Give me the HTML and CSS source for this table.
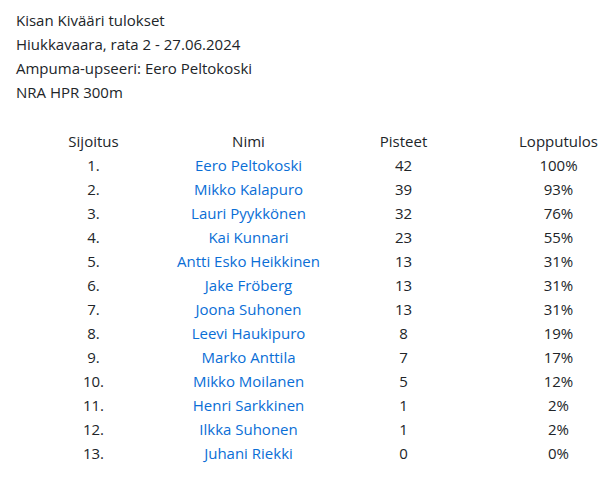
FILE: index.html
```html
<!DOCTYPE html>
<html lang="fi">
<head>
<meta charset="utf-8">
<title>Kisan Kivääri tulokset</title>
<link rel="stylesheet" href="styles.css">
</head>
<body>
<div class="page">
  <div class="info">
    <div class="line">Kisan Kivääri tulokset</div>
    <div class="line">Hiukkavaara, rata 2 - 27.06.2024</div>
    <div class="line">Ampuma-upseeri: Eero Peltokoski</div>
    <div class="line">NRA HPR 300m</div>
  </div>
  <div class="results">
    <div class="row head"><span>Sijoitus</span><span>Nimi</span><span>Pisteet</span><span>Lopputulos</span></div>
    <div class="row"><span>1.</span><a href="#">Eero Peltokoski</a><span>42</span><span>100%</span></div>
    <div class="row"><span>2.</span><a href="#">Mikko Kalapuro</a><span>39</span><span>93%</span></div>
    <div class="row"><span>3.</span><a href="#">Lauri Pyykkönen</a><span>32</span><span>76%</span></div>
    <div class="row"><span>4.</span><a href="#">Kai Kunnari</a><span>23</span><span>55%</span></div>
    <div class="row"><span>5.</span><a href="#">Antti Esko Heikkinen</a><span>13</span><span>31%</span></div>
    <div class="row"><span>6.</span><a href="#">Jake Fröberg</a><span>13</span><span>31%</span></div>
    <div class="row"><span>7.</span><a href="#">Joona Suhonen</a><span>13</span><span>31%</span></div>
    <div class="row"><span>8.</span><a href="#">Leevi Haukipuro</a><span>8</span><span>19%</span></div>
    <div class="row"><span>9.</span><a href="#">Marko Anttila</a><span>7</span><span>17%</span></div>
    <div class="row"><span>10.</span><a href="#">Mikko Moilanen</a><span>5</span><span>12%</span></div>
    <div class="row"><span>11.</span><a href="#">Henri Sarkkinen</a><span>1</span><span>2%</span></div>
    <div class="row"><span>12.</span><a href="#">Ilkka Suhonen</a><span>1</span><span>2%</span></div>
    <div class="row"><span>13.</span><a href="#">Juhani Riekki</a><span>0</span><span>0%</span></div>
  </div>
</div>
</body>
</html>
```
FILE: styles.css
```css
html, body {
  margin: 0;
  padding: 0;
  overflow: hidden;
  background: #ffffff;
}
body {
  font-family: "Open Sans", "Noto Sans", "Liberation Sans", sans-serif;
  font-size: 15px;
  color: #212529;
}
.page {
  padding: 8px 0 0 16px;
}
.info .line {
  height: 24px;
  line-height: 24px;
  white-space: nowrap;
}
.results {
  margin-top: 25px;
  width: 620px;
}
.row {
  display: grid;
  grid-template-columns: repeat(4, 155px);
  height: 24px;
  line-height: 24px;
}
.row > * {
  text-align: center;
  white-space: nowrap;
}
.row a {
  color: #0a6ed6;
  text-decoration: none;
}
```
